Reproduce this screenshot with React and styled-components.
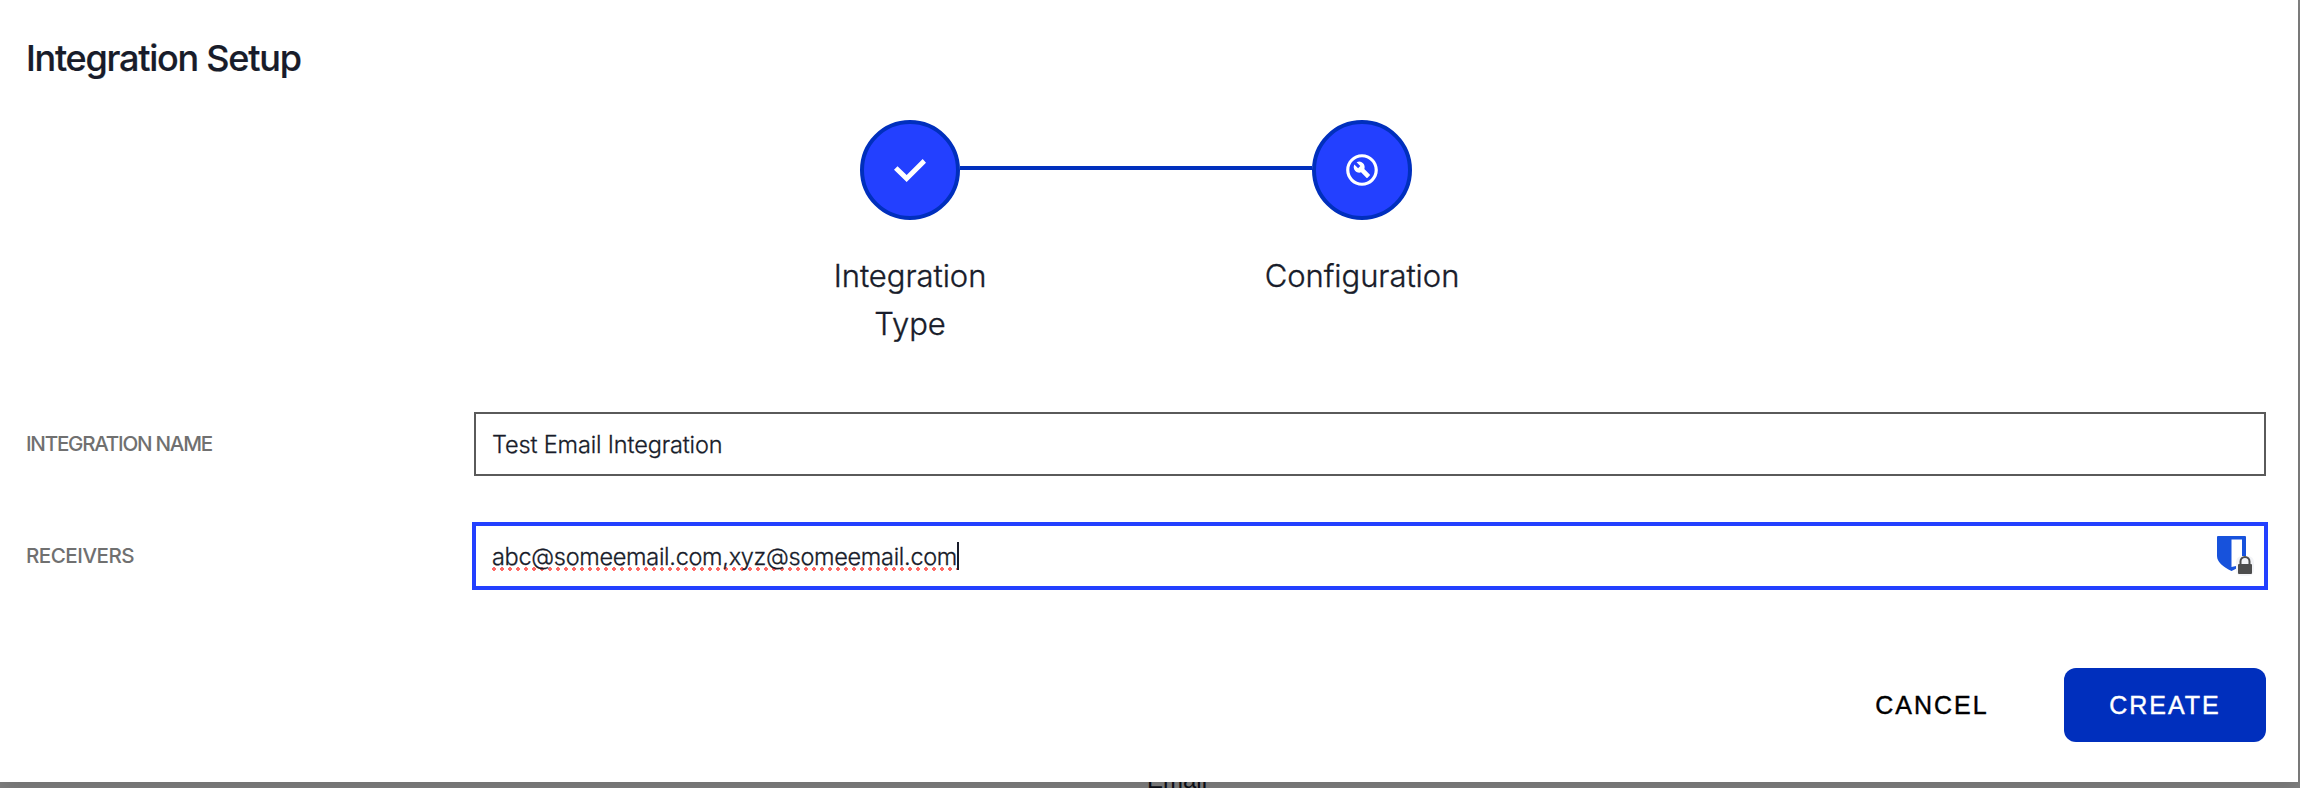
import React from 'react';
import styled, { createGlobalStyle } from 'styled-components';
import { MdOutlineBuildCircle } from 'react-icons/md';

const GlobalStyle = createGlobalStyle`
  * { box-sizing: border-box; }
  html, body { margin: 0; height: 100%; overflow: hidden; }
  body { font-family: Inter, "Liberation Sans", sans-serif; background: #757575; color: #181c2a; }
`;

const Page = styled.div`
  width: 2300px;
  height: 788px;
  overflow: hidden;
  position: relative;
  background: #808080;
`;

const BackdropLabel = styled.span`
  position: absolute;
  left: 1147px;
  top: 764px;
  font-family: "Liberation Sans", Arial, sans-serif;
  font-size: 24px;
  line-height: 32px;
  color: #0b0d15;
`;

const Dialog = styled.section`
  position: relative;
  width: 2298px;
  height: 782px;
  padding: 34px 32px 0 26px;
  background: #fff;
  box-shadow: 0 8px 20px rgba(0, 0, 0, 0.12);
`;

const Title = styled.h1`
  margin: 0;
  height: 86px;
  font-size: 36px;
  line-height: 48px;
  font-weight: 500;
  letter-spacing: -1.25px;
  -webkit-text-stroke: 0.2px currentColor;
`;

const Stepper = styled.ol`
  list-style: none;
  margin: 0 0 0 784px;
  padding: 0;
  height: 292px;
  display: flex;
`;

const Step = styled.li`
  width: 200px;
  display: flex;
  flex-direction: column;
  align-items: center;
  gap: 32px;
`;

const StepCircle = styled.div`
  width: 100px;
  height: 100px;
  display: grid;
  place-items: center;
  border: 4px solid #002fbd;
  border-radius: 50%;
  background: #2340ff;
  color: #fff;
`;

const StepLabel = styled.span`
  font-size: 31px;
  line-height: 48px;
  font-weight: 300;
  text-align: center;
  letter-spacing: -0.05px;
  -webkit-text-stroke: 0.35px currentColor;
`;

const Connector = styled.li`
  width: 352px;
  height: 4px;
  margin: 46px -50px 0;
  background: #002fbd;
`;

const Field = styled.div`
  display: grid;
  grid-template-columns: 448px 1792px;
  height: 64px;
  margin-bottom: 48px;
`;

const FieldLabel = styled.label`
  font-size: 20.6px;
  line-height: 64px;
  font-weight: 500;
  color: #707070;
  letter-spacing: ${(p) => p.$tracking};
`;

const Input = styled.div`
  display: flex;
  align-items: center;
  justify-content: space-between;
  height: 64px;
  padding: 0 10px 0 16px;
  border: 2px solid #5a5a5a;
  background: #fff;
  font-size: 23.5px;
  line-height: 32px;
  font-weight: 300;
`;

const FocusedInput = styled(Input)`
  height: 68px;
  margin: -2px;
  border: 4px solid #2340ff;
`;

const Value = styled.span`
  padding-top: 2px;
  letter-spacing: ${(p) => p.$tracking};
  -webkit-text-stroke: 0.3px currentColor;
`;

const Misspelled = styled(Value)`
  background: radial-gradient(circle at 2px 2px, #ff6b66 1.7px, transparent 2.1px) 0 28px / 8px 4px repeat-x;
`;

const Entry = styled.div`
  display: flex;
  align-items: center;
`;

const Caret = styled.i`
  width: 2px;
  height: 28px;
  background: #181c2a;
`;

const Actions = styled.div`
  display: flex;
  justify-content: flex-end;
  margin-top: 80px;
`;

const Button = styled.button`
  height: 74px;
  width: ${(p) => (p.$primary ? '202px' : '188px')};
  padding: 0;
  border: 0;
  border-radius: 12px;
  background: ${(p) => (p.$primary ? '#002fbd' : 'transparent')};
  color: ${(p) => (p.$primary ? '#fff' : '#000')};
  font: 400 25px/32px "Liberation Sans", Arial, sans-serif;
  letter-spacing: 2px;
  -webkit-text-stroke: 0.4px currentColor;
  margin-left: 38px;
`;

const CheckIcon = () => (
  <svg width="32" height="23" viewBox="0 0 96 69" fill="currentColor">
    <path d="M0 32 10.5 21.5 38 48 86 0 96 11 38 69Z" />
  </svg>
);

const ShieldIcon = () => (
  <svg width="38" height="42" viewBox="0 0 38 42">
    <path d="M1 2q0-1 1-1h27q1 0 1 1v20c0 6-6 10-14.500 14C7 32 1 27 1 21Z" fill="#1752dc" />
    <path d="M15.500 4.500H26V22L20 31l-4.500 1Z" fill="#fff" />
    <rect x="20" y="21" width="18" height="20" rx="6" fill="#f3f4f7" />
    <path d="M24.500 30v-3.500a4.500 4.500 0 0 1 9 0V30" fill="none" stroke="#4d4d4d" strokeWidth="2" />
    <rect x="22" y="29" width="14" height="10" rx="1" fill="#4d4d4d" />
  </svg>
);

export default function App() {
  return (
    <Page>
      <GlobalStyle />
      <BackdropLabel>Email</BackdropLabel>
      <Dialog>
        <Title>Integration Setup</Title>
        <Stepper>
          <Step>
            <StepCircle><CheckIcon /></StepCircle>
            <StepLabel>Integration<br />Type</StepLabel>
          </Step>
          <Connector />
          <Step>
            <StepCircle><MdOutlineBuildCircle size={38} /></StepCircle>
            <StepLabel>Configuration</StepLabel>
          </Step>
        </Stepper>
        <Field>
          <FieldLabel $tracking="-1.25px">INTEGRATION NAME</FieldLabel>
          <Input><Value $tracking="-0.15px">Test Email Integration</Value></Input>
        </Field>
        <Field>
          <FieldLabel $tracking="-0.5px">RECEIVERS</FieldLabel>
          <FocusedInput>
            <Entry>
              <Misspelled $tracking="-0.3px">abc@someemail.com,xyz@someemail.com</Misspelled>
              <Caret />
            </Entry>
            <ShieldIcon />
          </FocusedInput>
        </Field>
        <Actions>
          <Button>CANCEL</Button>
          <Button $primary>CREATE</Button>
        </Actions>
      </Dialog>
    </Page>
  );
}
